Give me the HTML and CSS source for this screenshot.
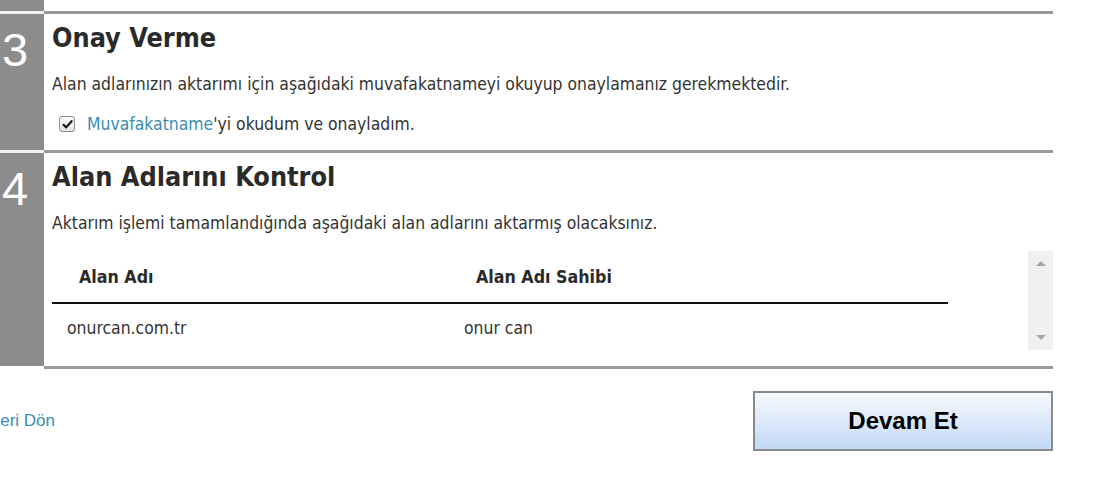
FILE: index.html
```html
<!DOCTYPE html>
<html lang="tr">
<head>
<meta charset="utf-8">
<title>Alan Adı Aktarımı</title>
<link rel="stylesheet" href="styles.css">
</head>
<body>
<div class="page">
  <div class="step step-prev">
    <div class="num"></div>
    <div class="body"></div>
  </div>

  <div class="step">
    <div class="num">3</div>
    <div class="body">
      <h2 class="title">Onay Verme</h2>
      <p class="text">Alan adlarınızın aktarımı için aşağıdaki muvafakatnameyi okuyup onaylamanız gerekmektedir.</p>
      <label class="agree">
        <span class="check"><svg width="11" height="11" viewBox="0 0 11 11"><path d="M1.5 5.8 L4.2 8.4 L9.6 2.2" fill="none" stroke="#1a1a1a" stroke-width="2.2" stroke-linecap="round" stroke-linejoin="round"/></svg></span>
        <span><a class="link" href="#">Muvafakatname</a>'yi okudum ve onayladım.</span>
      </label>
    </div>
  </div>

  <div class="step last">
    <div class="num">4</div>
    <div class="body">
      <h2 class="title">Alan Adlarını Kontrol</h2>
      <p class="text">Aktarım işlemi tamamlandığında aşağıdaki alan adlarını aktarmış olacaksınız.</p>
      <div class="grid-box">
        <table class="grid">
          <thead>
            <tr><th class="c1">Alan Adı</th><th class="c2">Alan Adı Sahibi</th></tr>
          </thead>
          <tbody>
            <tr><td>onurcan.com.tr</td><td>onur can</td></tr>
          </tbody>
        </table>
        <div class="scrollbar"><span class="arrow up"></span><span class="arrow down"></span></div>
      </div>
    </div>
  </div>

  <div class="footer">
    <a class="back" href="#">Geri Dön</a>
    <button class="next" type="button">Devam Et</button>
  </div>
</div>
</body>
</html>
```

FILE: styles.css
```css
html, body {
  margin: 0;
  padding: 0;
  background: #fff;
}

.page {
  width: 1053px;
  font-family: "DejaVu Sans Condensed", "DejaVu Sans", sans-serif;
  font-stretch: condensed;
  color: #333;
}

.step {
  display: flex;
}

.num {
  width: 44px;
  flex: none;
  box-sizing: border-box;
  background: #8c8c8c;
  border-top: 3px solid #f2f2f2;
  color: #fff;
  font-family: "Liberation Sans", Arial, sans-serif;
  font-stretch: normal;
  font-size: 47px;
  line-height: 1;
  padding: 12px 0 0 2px;
}

.body {
  flex: 1;
  border-top: 3px solid #999;
  padding: 9px 0 16px 8px;
}

.step-prev .num,
.step-prev .body {
  height: 11px;
  border-top: 0;
  padding: 0;
}

.last .num {
  margin-bottom: 3px;
}

.last .body {
  border-bottom: 3px solid #999;
}

.title {
  margin: 0;
  font-size: 26.8px;
  line-height: 30px;
  font-weight: bold;
  color: #2a2a2a;
}

.text {
  margin: 21px 0 0;
  font-size: 17.4px;
  line-height: 20px;
}

.agree {
  display: flex;
  align-items: center;
  height: 20px;
  margin: 20px 0 0 7px;
  font-size: 17.4px;
  line-height: 20px;
}

.check {
  width: 14px;
  height: 14px;
  border: 1px solid #8f8f8f;
  border-radius: 3px;
  background: linear-gradient(#fcfcfc, #e4e4e4);
  display: flex;
  align-items: center;
  justify-content: center;
  margin-right: 12px;
}

.link {
  color: #3a8cb5;
  text-decoration: none;
}

.grid-box {
  display: flex;
  justify-content: space-between;
  height: 99px;
  margin-top: 18px;
}

.grid {
  width: 896px;
  border-collapse: collapse;
  font-size: 17.4px;
  align-self: flex-start;
}

.grid th {
  height: 51px;
  padding: 0 0 0 27px;
  text-align: left;
  font-size: 17.7px;
  font-weight: bold;
  color: #2a2a2a;
  border-bottom: 2px solid #111;
  vertical-align: middle;
}

.grid th.c1 {
  width: 370px;
}

.grid td {
  height: 46px;
  padding: 3px 0 0 15px;
  box-sizing: border-box;
  vertical-align: middle;
}

.scrollbar {
  width: 25px;
  background: #f0f0f0;
  display: flex;
  flex-direction: column;
  justify-content: space-between;
  align-items: center;
  padding: 10px 0;
  box-sizing: border-box;
}

.arrow {
  width: 0;
  height: 0;
  border-left: 5px solid transparent;
  border-right: 5px solid transparent;
}

.arrow.up {
  border-bottom: 5px solid #a6a6a6;
}

.arrow.down {
  border-top: 5px solid #a6a6a6;
}

.footer {
  display: flex;
  justify-content: space-between;
  align-items: center;
  margin-top: 22px;
}

.back {
  margin-left: -13px;
  font-family: "Liberation Sans", Arial, sans-serif;
  font-stretch: normal;
  font-size: 17px;
  color: #3a8cb5;
  text-decoration: none;
}

.next {
  width: 300px;
  height: 60px;
  border: 2px solid #8a8a8a;
  background: linear-gradient(#f6f9fe, #c3d9f5);
  font-family: "Liberation Sans", Arial, sans-serif;
  font-size: 24px;
  font-weight: bold;
  color: #000;
  padding: 0;
  cursor: pointer;
}
```
